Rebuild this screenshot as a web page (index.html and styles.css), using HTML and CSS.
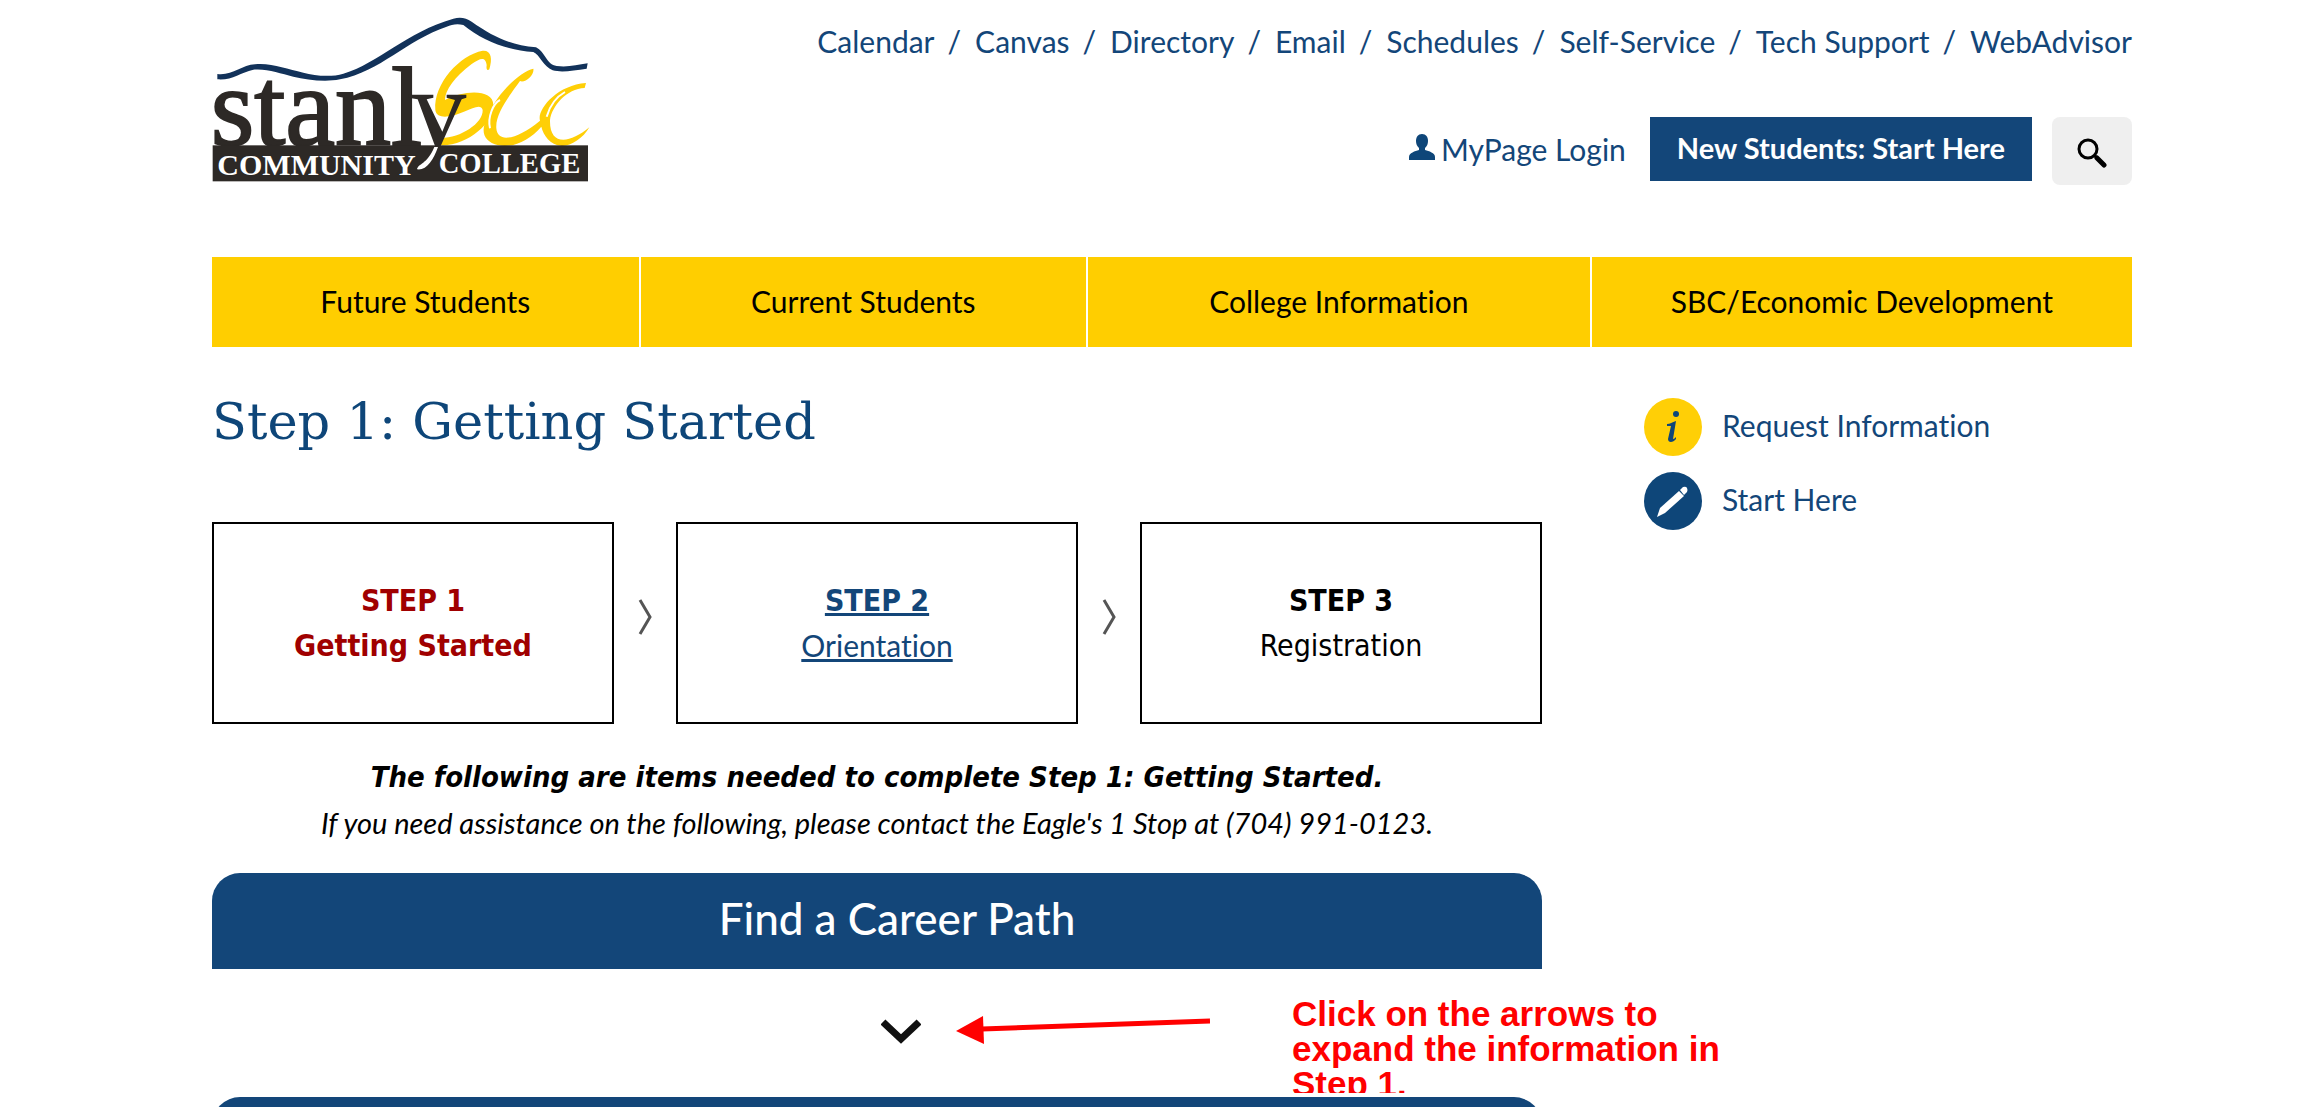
FILE: index.html
```html
<!DOCTYPE html>
<html lang="en">
<head>
    <meta charset="UTF-8">
    <meta name="viewport" content="width=device-width, initial-scale=1.0">
    <title>Step 1: Getting Started</title>
    <link rel="stylesheet" href="styles.css">
</head>
<body>
<div class="page">
    <header class="header">
        <a class="logo" href="#" aria-label="Stanly Community College">
            <svg width="400" height="200" viewBox="0 0 1200 600">
                <path class="logo-ridge" d="M52 222 C95 228 125 195 165 193 C215 188 260 208 310 218 C345 228 395 232 430 221 C535 190 620 95 760 56 C782 50 798 54 815 65 C880 110 930 135 1008 142 C1035 155 1040 195 1070 198 C1105 202 1130 195 1163 190 L1160 206 C1120 212 1085 218 1058 211 C1030 200 1020 165 1000 156 C925 150 850 125 790 75 C770 70 755 74 740 80 C620 120 540 215 420 238 C370 248 320 238 280 230 C240 220 200 205 160 209 C120 218 95 242 52 238 Z"/>
                <text class="logo-name" x="32" y="434">stanl</text>
                <g class="logo-script">
                    <path d="M706 330 C700 250 780 165 848 152 C874 150 878 175 868 208 C862 214 858 208 860 195 C856 168 840 175 815 192 C765 230 735 270 735 300 C790 270 880 265 880 315 C885 365 800 440 722 436 L722 414 C780 415 850 370 848 330 C840 300 790 348 735 350 C720 350 708 345 706 330Z"/>
                    <path d="M1000 206 C1004 225 975 250 960 243 C930 285 885 340 889 385 C892 430 950 420 1020 362 C1010 330 1070 255 1158 249 L1154 264 C1100 265 1055 320 1050 360 C1048 440 1110 430 1168 382 C1150 415 1110 440 1085 438 C1050 435 1030 405 1024 380 C990 420 940 445 895 436 C850 425 840 395 862 350 C890 280 960 215 1000 206Z"/>
                    <path class="logo-slit" d="M870 385 C862 350 880 310 900 300"/>
                    <path class="logo-slit" d="M1040 350 C1050 315 1070 290 1095 276"/>
                </g>
                <rect class="logo-bar" x="38" y="436" width="1126" height="108"/>
                <path class="logo-bar" d="M625 284 H700 V293 L680 298 L727 395 L765 300 L740 293 V284 H799 V293 L785 298 L722 438 H705 L653 298 L625 293Z"/>
                <path class="logo-tail" d="M703 441 H714 C700 480 680 512 651 508 C655 490 680 495 703 441Z"/>
                <text class="logo-caps" x="52" y="524">COMMUNITY</text>
                <text class="logo-caps college" x="716" y="520">COLLEGE</text>
            </svg>
        </a>
        <div class="header-side">
            <ul class="top-links">
                <li><a href="#">Calendar</a></li>
                <li><a href="#">Canvas</a></li>
                <li><a href="#">Directory</a></li>
                <li><a href="#">Email</a></li>
                <li><a href="#">Schedules</a></li>
                <li><a href="#">Self-Service</a></li>
                <li><a href="#">Tech Support</a></li>
                <li><a href="#">WebAdvisor</a></li>
            </ul>
            <div class="actions">
                <a class="login" href="#">
                    <svg width="26" height="28" viewBox="0 0 26 28"><path d="M13 0c4 0 6 3 6 7 0 3-1 5-3 7v2c4 1 10 3 10 7v3H0v-3c0-4 6-6 10-7v-2C8 12 7 10 7 7c0-4 2-7 6-7z"/></svg>
                    MyPage Login
                </a>
                <a class="start-button" href="#">New Students: Start Here</a>
                <button class="search-button" type="button" aria-label="Search">
                    <svg width="30" height="30" viewBox="0 0 30 30"><circle cx="11" cy="11" r="9"/><path d="M17 17l4 4"/><path class="handle" d="M20 20l7 7"/></svg>
                </button>
            </div>
        </div>
    </header>

    <nav class="main-nav">
        <a href="#">Future Students</a>
        <a href="#">Current Students</a>
        <a href="#">College Information</a>
        <a href="#">SBC/Economic Development</a>
    </nav>

    <div class="columns">
        <main class="content">
            <h1>Step 1: Getting Started</h1>
            <div class="steps">
                <div class="step current"><strong>STEP 1</strong><strong>Getting Started</strong></div>
                <svg class="step-arrow" width="14" height="36" viewBox="0 0 14 36"><path d="M2 1l10 17L2 35"/></svg>
                <a class="step" href="#"><strong>STEP 2</strong><span>Orientation</span></a>
                <svg class="step-arrow" width="14" height="36" viewBox="0 0 14 36"><path d="M2 1l10 17L2 35"/></svg>
                <div class="step"><strong>STEP 3</strong><span class="tahoma">Registration</span></div>
            </div>
            <p class="intro">
                <strong>The following are items needed to complete Step 1: Getting Started.</strong><br>
                If you need assistance on the following, please contact the Eagle's 1 Stop at (704) 991-0123.
            </p>
            <section class="panel">
                <h2 class="panel-bar">Find a Career Path</h2>
                <button class="expand" type="button" aria-label="Expand">
                    <svg width="40" height="26" viewBox="0 0 40 26"><path d="M2 3l18 17L38 3"/></svg>
                </button>
                <!-- annotation over the panel -->
                <div class="note">
                    <svg width="254" height="30" viewBox="0 0 254 30"><path class="note-line" d="M26 13L254 5"/><path class="note-head" d="M0 15L27 0L28 28Z"/></svg>
                    <p>Click on the arrows to expand the information in Step 1.</p>
                </div>
            </section>
            <section class="panel">
                <div class="panel-bar"></div>
            </section>
        </main>
        <aside class="side">
            <a href="#">
                <svg width="60" height="60" viewBox="0 0 60 60"><circle class="yellow" cx="31" cy="30" r="29"/><circle class="navy" cx="34" cy="17" r="3"/><path class="letter" d="M25 27C28 27 30 25 34 24L31 42C32 42 33 41 34 40L34 42C31 46 26 46 26 42L29 29L25 29Z"/></svg>
                <span>Request Information</span>
            </a>
            <a href="#">
                <svg width="60" height="60" viewBox="0 0 60 60"><circle class="navy" cx="31" cy="30" r="29"/><path class="pencil" d="M15 46l3-9 19-17 5 5-19 17z"/><path class="pencil" d="M38 19l3-3q3-1 4 1t0 4l-3 3z"/></svg>
                <span>Start Here</span>
            </a>
        </aside>
    </div>
</div>
</body>
</html>
```
FILE: styles.css
```css
* {
    box-sizing: border-box;
}
body {
    margin: 0;
    background: #fff;
    color: #000;
    font: 30px/45px Lato, sans-serif;
    font-variant-ligatures: none;
}
a {
    color: #134679;
    text-decoration: none;
}
h1, h2, p, ul {
    margin: 0;
    padding: 0;
}
.page {
    height: 100vh;
    padding: 0 178px 0 212px;
    overflow: hidden;
}

/* header */
.header {
    display: flex;
    justify-content: space-between;
    height: 257px;
}
.logo {
    margin-left: -12px;
}
.logo-ridge {
    fill: #12325a;
}
.logo-name {
    font: 336px "Liberation Serif", serif;
    fill: #2d2926;
    stroke: #2d2926;
    stroke-width: 6;
}
.logo-script {
    fill: #ffcf06;
}
.logo-slit {
    fill: none;
    stroke: #fff;
    stroke-width: 6;
}
.logo-bar {
    fill: #2d2926;
}
.logo-tail {
    fill: #fff;
}
.logo-caps {
    font: bold 90px "Liberation Serif", serif;
    fill: #fff;
}
.logo-caps.college {
    font-size: 86px;
}
.header-side {
    display: flex;
    flex-direction: column;
    align-items: flex-end;
    padding-top: 19px;
}
.top-links {
    display: flex;
    list-style: none;
}
.top-links li + li::before {
    content: "/";
    margin: 0 14px 0 13px;
    color: #134679;
}
.actions {
    display: flex;
    align-items: flex-start;
    margin-top: 53px;
}
.login {
    display: flex;
    align-items: center;
    gap: 6px;
    margin: 10px 24px 0 0;
}
.login svg {
    margin-bottom: 4px;
    fill: #0e4679;
}
.start-button {
    padding: 9px 27px 11px;
    background: #134679;
    color: #fff;
    font-weight: bold;
    font-size: 29px;
    line-height: 44px;
}
.search-button {
    display: flex;
    align-items: center;
    justify-content: center;
    width: 80px;
    height: 68px;
    padding: 4px 0 0;
    margin-left: 20px;
    border: 0;
    border-radius: 8px;
    background: #efefef;
}
.search-button svg {
    fill: none;
    stroke: #000;
    stroke-width: 3;
}
.search-button .handle {
    stroke-width: 5;
    stroke-linecap: round;
}

/* navigation */
.main-nav {
    display: grid;
    grid-template-columns: 427fr 446fr 502fr 541fr;
    column-gap: 2px;
}
.main-nav a {
    padding: 22px 0 23px;
    background: #ffce00;
    color: #000;
    text-align: center;
}

.columns {
    display: grid;
    grid-template-columns: 1330px 1fr;
    column-gap: 100px;
}
h1 {
    padding-top: 40px;
    color: #0e4679;
    font: 51px/70px "DejaVu Serif", serif;
}

/* steps */
.steps {
    display: flex;
    align-items: center;
    justify-content: space-between;
    margin-top: 65px;
}
.step {
    display: flex;
    flex-direction: column;
    align-items: center;
    width: 402px;
    padding: 54px 0;
    border: 2px solid #000;
}
a.step {
    text-decoration: underline;
    border-color: #000;
}
.step.current {
    color: #a00000;
}
.step strong, .intro strong, .tahoma {
    font-family: "DejaVu Sans Condensed", "DejaVu Sans", sans-serif;
}
.step-arrow {
    margin-bottom: 12px;
    fill: none;
    stroke: #555;
    stroke-width: 3;
}
.intro {
    margin-top: 29px;
    font-size: 29px;
    font-style: italic;
    text-align: center;
}

/* panels */
.panel {
    position: relative;
    margin-top: 28px;
}
.panel-bar {
    min-height: 96px;
    padding: 20px 0 26px 40px;
    border-radius: 28px 28px 0 0;
    background: #134679;
    color: #fff;
    font: 500 44px/50px Lato, sans-serif;
    text-align: center;
}
.expand {
    display: block;
    margin: 0 auto;
    padding: 50px 0 24px 48px;
    border: 0;
    background: none;
}
.expand svg {
    display: block;
    fill: none;
    stroke: #111;
    stroke-width: 7;
}
.note {
    position: absolute;
    top: 123px;
    left: 744px;
    display: flex;
    align-items: flex-start;
    gap: 82px;
    height: 97px;
    overflow: hidden;
}
.note svg {
    flex: none;
    margin-top: 20px;
}
.note-line {
    stroke: #f00;
    stroke-width: 5;
}
.note-head {
    fill: #f00;
}
.note p {
    width: 450px;
    color: #f00;
    font: bold 35px/35px "Liberation Sans", Arial, sans-serif;
}

/* side links */
.side {
    padding-top: 50px;
}
.side a {
    display: flex;
    align-items: center;
    gap: 20px;
    margin-bottom: 14px;
}
.side span {
    padding-bottom: 4px;
}
.yellow {
    fill: #ffcf06;
}
.navy, .letter {
    fill: #0e4679;
}
.pencil {
    fill: #fff;
}
```
